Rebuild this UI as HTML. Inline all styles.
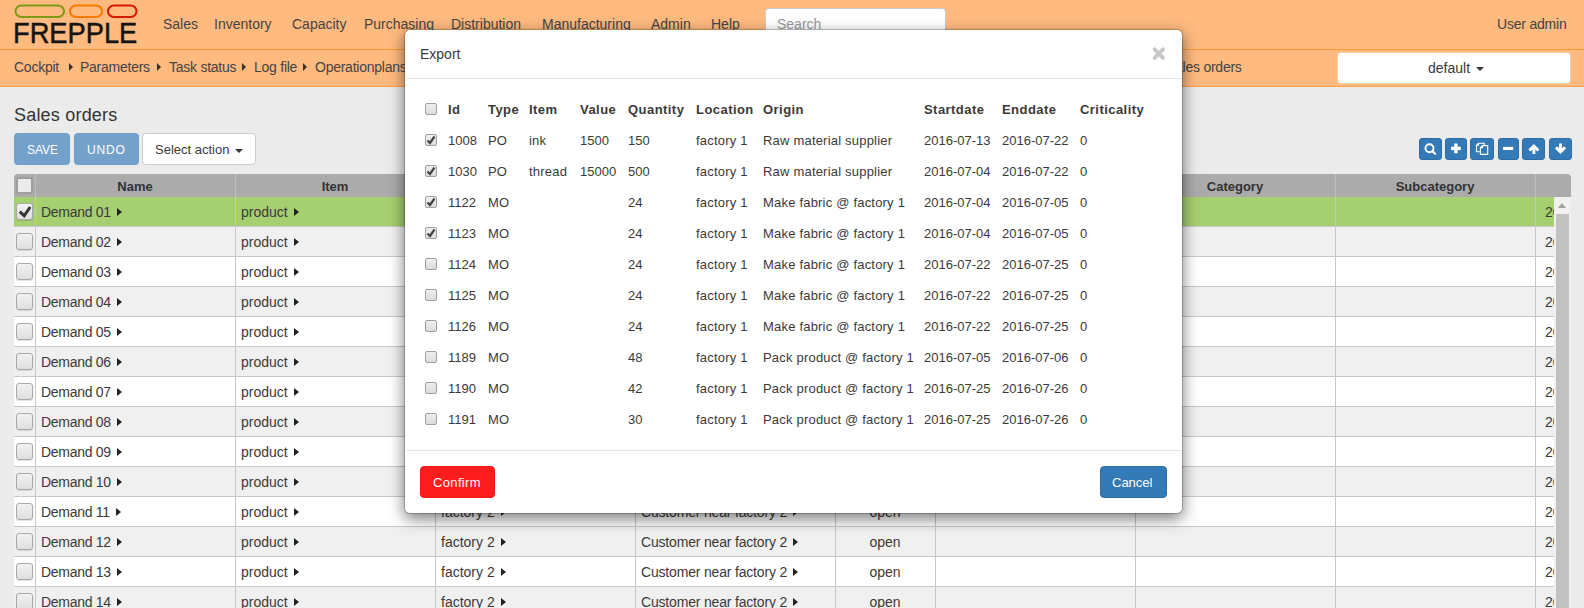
<!DOCTYPE html><html><head><meta charset="utf-8"><style>
*{box-sizing:border-box}
html,body{margin:0;padding:0;width:1584px;height:608px;overflow:hidden;background:#ebebeb;font-family:"Liberation Sans",sans-serif;color:#3a3a3a;position:relative}
.a{position:absolute;white-space:nowrap}
.t14{font-size:14px;line-height:16px}
.t13{font-size:13px;line-height:15px}
.nav{color:#444}
.caret{display:inline-block;width:0;height:0;border-top:4px solid #333;border-left:4px solid transparent;border-right:4px solid transparent;vertical-align:middle}
.rc{display:inline-block;width:0;height:0;border-left:5px solid #222;border-top:4px solid transparent;border-bottom:4px solid transparent;vertical-align:middle;margin-left:6px;position:relative;top:-1px}
</style></head><body><div class="a" style="left:0;top:0;width:1584px;height:49px;background:#ffba7f"></div>
<div class="a" style="left:0;top:49px;width:1584px;height:1px;background:#ff9833"></div>
<div class="a" style="left:0;top:50px;width:1584px;height:36px;background:#ffba7f"></div>
<div class="a" style="left:0;top:86px;width:1584px;height:1px;background:#ffa24f"></div>
<svg class="a" style="left:0;top:0" width="150" height="48" viewBox="0 0 150 48">
<rect x="15.5" y="5.5" width="48.5" height="11.5" rx="5.75" fill="none" stroke="#7f9a14" stroke-width="2"/>
<rect x="70" y="5.5" width="32" height="11.5" rx="5.75" fill="none" stroke="#f97a00" stroke-width="2"/>
<rect x="108" y="5.5" width="28.5" height="11.5" rx="5.75" fill="none" stroke="#d61a00" stroke-width="2"/>
<text x="13" y="42.8" font-family="Liberation Sans" font-size="30" textLength="124.3" lengthAdjust="spacingAndGlyphs" fill="#151515" stroke="#151515" stroke-width="0.5">FREPPLE</text>
</svg>
<div class="a t14 nav" style="left:163px;top:16px;">Sales</div>
<div class="a t14 nav" style="left:214px;top:16px;">Inventory</div>
<div class="a t14 nav" style="left:292px;top:16px;">Capacity</div>
<div class="a t14 nav" style="left:364px;top:16px;">Purchasing</div>
<div class="a t14 nav" style="left:451px;top:16px;">Distribution</div>
<div class="a t14 nav" style="left:542px;top:16px;">Manufacturing</div>
<div class="a t14 nav" style="left:651px;top:16px;">Admin</div>
<div class="a t14 nav" style="left:711px;top:16px;">Help</div>
<div class="a" style="left:765px;top:8px;width:181px;height:34px;background:#fff;border:1px solid #ccc;border-radius:4px"></div>
<div class="a t14" style="left:777px;top:16px;color:#999">Search</div>
<div class="a t14 nav" style="left:1497px;top:16px;letter-spacing:-0.2px">User admin</div>
<div class="a t14 nav" style="left:14px;top:59px;letter-spacing:-0.25px">Cockpit</div>
<div class="a t14 nav" style="left:80px;top:59px;letter-spacing:-0.25px">Parameters</div>
<div class="a t14 nav" style="left:169px;top:59px;letter-spacing:-0.25px">Task status</div>
<div class="a t14 nav" style="left:254px;top:59px;letter-spacing:-0.25px">Log file</div>
<div class="a t14 nav" style="left:315px;top:59px;letter-spacing:-0.25px">Operationplans</div>
<div class="a" style="left:69px;top:63px;width:0;height:0;border-left:4px solid #333;border-top:4px solid transparent;border-bottom:4px solid transparent"></div>
<div class="a" style="left:157px;top:63px;width:0;height:0;border-left:4px solid #333;border-top:4px solid transparent;border-bottom:4px solid transparent"></div>
<div class="a" style="left:242px;top:63px;width:0;height:0;border-left:4px solid #333;border-top:4px solid transparent;border-bottom:4px solid transparent"></div>
<div class="a" style="left:303px;top:63px;width:0;height:0;border-left:4px solid #333;border-top:4px solid transparent;border-bottom:4px solid transparent"></div>
<div class="a t14 nav" style="left:1166px;top:59px;letter-spacing:-0.25px">Sales orders</div>
<div class="a" style="left:1337px;top:52px;width:234px;height:32px;background:#fff;border:1px solid #f0d0b0;border-radius:4px"></div>
<div class="a t14" style="left:1428px;top:60px;">default <span class="caret" style="margin-left:2px"></span></div>
<div class="a " style="left:14px;top:105px;font-size:18px;line-height:20px;color:#333;letter-spacing:0.2px">Sales orders</div>
<div class="a" style="left:14px;top:133px;width:56px;height:32px;background:#73a1c9;border-radius:4px"></div>
<div class="a " style="left:27px;top:143px;font-size:12px;line-height:14px;color:#fff">SAVE</div>
<div class="a" style="left:74px;top:133px;width:65px;height:32px;background:#73a1c9;border-radius:4px"></div>
<div class="a " style="left:87px;top:143px;font-size:12px;line-height:14px;color:#fff;letter-spacing:0.8px">UNDO</div>
<div class="a" style="left:142px;top:133px;width:114px;height:32px;background:#fff;border:1px solid #ccc;border-radius:4px"></div>
<div class="a t13" style="left:155px;top:142px;">Select action <span class="caret" style="margin-left:2px"></span></div>
<div class="a" style="left:1419px;top:138px;width:23px;height:22px;background:#337ab7;border:1px solid #2e6da4;border-radius:3px"></div>
<div class="a" style="left:1445px;top:138px;width:22px;height:22px;background:#337ab7;border:1px solid #2e6da4;border-radius:3px"></div>
<div class="a" style="left:1470px;top:138px;width:24px;height:22px;background:#337ab7;border:1px solid #2e6da4;border-radius:3px"></div>
<div class="a" style="left:1498px;top:138px;width:21px;height:22px;background:#337ab7;border:1px solid #2e6da4;border-radius:3px"></div>
<div class="a" style="left:1522px;top:138px;width:23px;height:22px;background:#337ab7;border:1px solid #2e6da4;border-radius:3px"></div>
<div class="a" style="left:1549px;top:138px;width:23px;height:22px;background:#337ab7;border:1px solid #2e6da4;border-radius:3px"></div>
<svg class="a" style="left:1400px;top:130px" width="184" height="40" viewBox="1400 130 184 40">
<g fill="none" stroke="#fff">
<circle cx="1429.5" cy="148.2" r="4" stroke-width="1.9"/>
<line x1="1432.4" y1="151.1" x2="1435.1" y2="153.8" stroke-width="2.2" stroke-linecap="round"/>
<path d="M1478.5 143.3 h5.7 v8.4 h-7.7 v-6.4 z M1476.5 145.3 h2 v-2" stroke-width="1.1"/>
<path d="M1482.5 145.6 h5.2 v8.8 h-7.3 v-6.6 z M1480.4 147.8 h2.1 v-2.2" stroke-width="1.1" fill="#337ab7"/>
</g>
<g fill="#fff">
<rect x="1451" y="146.7" width="9.8" height="3.4"/>
<rect x="1454.2" y="143.5" width="3.4" height="9.8"/>
<rect x="1503" y="146.9" width="10.2" height="3.1"/>
</g>
<path d="M1529.4 150.5 L1533.9 146 L1538.4 150.5 M1533.9 146.5 V154" fill="none" stroke="#fff" stroke-width="2.9" stroke-linecap="butt" stroke-linejoin="miter"/>
<path d="M1556 147.4 L1560.5 151.9 L1565 147.4 M1560.5 143.6 V151.4" fill="none" stroke="#fff" stroke-width="2.9" stroke-linecap="butt" stroke-linejoin="miter"/>
</svg>
<div class="a" style="left:14px;top:174px;width:1557px;height:434px;background:#fff;border-radius:4px 4px 0 0;overflow:hidden">
<div class="a" style="left:0;top:0;width:1557px;height:23px;background:#ababab"></div>
<div class="a" style="left:0;top:23px;width:1557px;height:29px;background:#a6cf71"></div>
<div class="a" style="left:0;top:52px;width:1557px;height:1px;background:#c8c8c8"></div>
<div class="a" style="left:0;top:53px;width:1557px;height:29px;background:#f0f0f0"></div>
<div class="a" style="left:0;top:82px;width:1557px;height:1px;background:#c8c8c8"></div>
<div class="a" style="left:0;top:83px;width:1557px;height:29px;background:#ffffff"></div>
<div class="a" style="left:0;top:112px;width:1557px;height:1px;background:#c8c8c8"></div>
<div class="a" style="left:0;top:113px;width:1557px;height:29px;background:#f0f0f0"></div>
<div class="a" style="left:0;top:142px;width:1557px;height:1px;background:#c8c8c8"></div>
<div class="a" style="left:0;top:143px;width:1557px;height:29px;background:#ffffff"></div>
<div class="a" style="left:0;top:172px;width:1557px;height:1px;background:#c8c8c8"></div>
<div class="a" style="left:0;top:173px;width:1557px;height:29px;background:#f0f0f0"></div>
<div class="a" style="left:0;top:202px;width:1557px;height:1px;background:#c8c8c8"></div>
<div class="a" style="left:0;top:203px;width:1557px;height:29px;background:#ffffff"></div>
<div class="a" style="left:0;top:232px;width:1557px;height:1px;background:#c8c8c8"></div>
<div class="a" style="left:0;top:233px;width:1557px;height:29px;background:#f0f0f0"></div>
<div class="a" style="left:0;top:262px;width:1557px;height:1px;background:#c8c8c8"></div>
<div class="a" style="left:0;top:263px;width:1557px;height:29px;background:#ffffff"></div>
<div class="a" style="left:0;top:292px;width:1557px;height:1px;background:#c8c8c8"></div>
<div class="a" style="left:0;top:293px;width:1557px;height:29px;background:#f0f0f0"></div>
<div class="a" style="left:0;top:322px;width:1557px;height:1px;background:#c8c8c8"></div>
<div class="a" style="left:0;top:323px;width:1557px;height:29px;background:#ffffff"></div>
<div class="a" style="left:0;top:352px;width:1557px;height:1px;background:#c8c8c8"></div>
<div class="a" style="left:0;top:353px;width:1557px;height:29px;background:#f0f0f0"></div>
<div class="a" style="left:0;top:382px;width:1557px;height:1px;background:#c8c8c8"></div>
<div class="a" style="left:0;top:383px;width:1557px;height:29px;background:#ffffff"></div>
<div class="a" style="left:0;top:412px;width:1557px;height:1px;background:#c8c8c8"></div>
<div class="a" style="left:0;top:413px;width:1557px;height:29px;background:#f0f0f0"></div>
<div class="a" style="left:0;top:442px;width:1557px;height:1px;background:#c8c8c8"></div>
<div class="a" style="left:21px;top:0;width:1px;height:23px;background:#bdbdbd"></div>
<div class="a" style="left:21px;top:23px;width:1px;height:600px;background:#c8c8c8"></div>
<div class="a" style="left:221px;top:0;width:1px;height:23px;background:#bdbdbd"></div>
<div class="a" style="left:221px;top:23px;width:1px;height:600px;background:#c8c8c8"></div>
<div class="a" style="left:421px;top:0;width:1px;height:23px;background:#bdbdbd"></div>
<div class="a" style="left:421px;top:23px;width:1px;height:600px;background:#c8c8c8"></div>
<div class="a" style="left:621px;top:0;width:1px;height:23px;background:#bdbdbd"></div>
<div class="a" style="left:621px;top:23px;width:1px;height:600px;background:#c8c8c8"></div>
<div class="a" style="left:821px;top:0;width:1px;height:23px;background:#bdbdbd"></div>
<div class="a" style="left:821px;top:23px;width:1px;height:600px;background:#c8c8c8"></div>
<div class="a" style="left:921px;top:0;width:1px;height:23px;background:#bdbdbd"></div>
<div class="a" style="left:921px;top:23px;width:1px;height:600px;background:#c8c8c8"></div>
<div class="a" style="left:1121px;top:0;width:1px;height:23px;background:#bdbdbd"></div>
<div class="a" style="left:1121px;top:23px;width:1px;height:600px;background:#c8c8c8"></div>
<div class="a" style="left:1321px;top:0;width:1px;height:23px;background:#bdbdbd"></div>
<div class="a" style="left:1321px;top:23px;width:1px;height:600px;background:#c8c8c8"></div>
<div class="a" style="left:1521px;top:0;width:1px;height:23px;background:#bdbdbd"></div>
<div class="a" style="left:1521px;top:23px;width:1px;height:600px;background:#c8c8c8"></div>
</div>
<div class="a" style="left:35px;width:200px;text-align:center;top:179px;font-size:13px;line-height:15px;font-weight:bold;color:#333">Name</div>
<div class="a" style="left:235px;width:200px;text-align:center;top:179px;font-size:13px;line-height:15px;font-weight:bold;color:#333">Item</div>
<div class="a" style="left:1135px;width:200px;text-align:center;top:179px;font-size:13px;line-height:15px;font-weight:bold;color:#333">Category</div>
<div class="a" style="left:1335px;width:200px;text-align:center;top:179px;font-size:13px;line-height:15px;font-weight:bold;color:#333">Subcategory</div>
<div class="a t14" style="left:41px;top:204px;"><span style="letter-spacing:-0.3px">Demand 01</span><span class="rc"></span></div>
<div class="a t14" style="left:241px;top:204px;">product<span class="rc"></span></div>
<div class="a t14" style="left:441px;top:204px;">factory 2<span class="rc"></span></div>
<div class="a t14" style="left:641px;top:204px;"><span style="letter-spacing:-0.18px">Customer near factory 2</span><span class="rc"></span></div>
<div class="a t14" style="left:835px;width:100px;text-align:center;top:204px">open</div>
<div class="a t14" style="left:1545px;top:204px;">20</div>
<div class="a" style="left:16px;top:203px;width:17px;height:17px;border:1px solid #a8a8a8;border-radius:3px;background:linear-gradient(#f2f2f2,#dedede);box-shadow:0 1px 1px rgba(0,0,0,.12)"><svg width="17" height="17" style="position:absolute;left:0;top:0"><path d="M2.8 7.6 L7.2 11.8 L13.2 3" stroke="#333" stroke-width="3" fill="none"/></svg></div>
<div class="a t14" style="left:41px;top:234px;"><span style="letter-spacing:-0.3px">Demand 02</span><span class="rc"></span></div>
<div class="a t14" style="left:241px;top:234px;">product<span class="rc"></span></div>
<div class="a t14" style="left:441px;top:234px;">factory 2<span class="rc"></span></div>
<div class="a t14" style="left:641px;top:234px;"><span style="letter-spacing:-0.18px">Customer near factory 2</span><span class="rc"></span></div>
<div class="a t14" style="left:835px;width:100px;text-align:center;top:234px">open</div>
<div class="a t14" style="left:1545px;top:234px;">20</div>
<div class="a" style="left:16px;top:233px;width:17px;height:17px;border:1px solid #a8a8a8;border-radius:3px;background:linear-gradient(#f2f2f2,#dedede);box-shadow:0 1px 1px rgba(0,0,0,.12)"></div>
<div class="a t14" style="left:41px;top:264px;"><span style="letter-spacing:-0.3px">Demand 03</span><span class="rc"></span></div>
<div class="a t14" style="left:241px;top:264px;">product<span class="rc"></span></div>
<div class="a t14" style="left:441px;top:264px;">factory 2<span class="rc"></span></div>
<div class="a t14" style="left:641px;top:264px;"><span style="letter-spacing:-0.18px">Customer near factory 2</span><span class="rc"></span></div>
<div class="a t14" style="left:835px;width:100px;text-align:center;top:264px">open</div>
<div class="a t14" style="left:1545px;top:264px;">20</div>
<div class="a" style="left:16px;top:263px;width:17px;height:17px;border:1px solid #a8a8a8;border-radius:3px;background:linear-gradient(#f2f2f2,#dedede);box-shadow:0 1px 1px rgba(0,0,0,.12)"></div>
<div class="a t14" style="left:41px;top:294px;"><span style="letter-spacing:-0.3px">Demand 04</span><span class="rc"></span></div>
<div class="a t14" style="left:241px;top:294px;">product<span class="rc"></span></div>
<div class="a t14" style="left:441px;top:294px;">factory 2<span class="rc"></span></div>
<div class="a t14" style="left:641px;top:294px;"><span style="letter-spacing:-0.18px">Customer near factory 2</span><span class="rc"></span></div>
<div class="a t14" style="left:835px;width:100px;text-align:center;top:294px">open</div>
<div class="a t14" style="left:1545px;top:294px;">20</div>
<div class="a" style="left:16px;top:293px;width:17px;height:17px;border:1px solid #a8a8a8;border-radius:3px;background:linear-gradient(#f2f2f2,#dedede);box-shadow:0 1px 1px rgba(0,0,0,.12)"></div>
<div class="a t14" style="left:41px;top:324px;"><span style="letter-spacing:-0.3px">Demand 05</span><span class="rc"></span></div>
<div class="a t14" style="left:241px;top:324px;">product<span class="rc"></span></div>
<div class="a t14" style="left:441px;top:324px;">factory 2<span class="rc"></span></div>
<div class="a t14" style="left:641px;top:324px;"><span style="letter-spacing:-0.18px">Customer near factory 2</span><span class="rc"></span></div>
<div class="a t14" style="left:835px;width:100px;text-align:center;top:324px">open</div>
<div class="a t14" style="left:1545px;top:324px;">20</div>
<div class="a" style="left:16px;top:323px;width:17px;height:17px;border:1px solid #a8a8a8;border-radius:3px;background:linear-gradient(#f2f2f2,#dedede);box-shadow:0 1px 1px rgba(0,0,0,.12)"></div>
<div class="a t14" style="left:41px;top:354px;"><span style="letter-spacing:-0.3px">Demand 06</span><span class="rc"></span></div>
<div class="a t14" style="left:241px;top:354px;">product<span class="rc"></span></div>
<div class="a t14" style="left:441px;top:354px;">factory 2<span class="rc"></span></div>
<div class="a t14" style="left:641px;top:354px;"><span style="letter-spacing:-0.18px">Customer near factory 2</span><span class="rc"></span></div>
<div class="a t14" style="left:835px;width:100px;text-align:center;top:354px">open</div>
<div class="a t14" style="left:1545px;top:354px;">20</div>
<div class="a" style="left:16px;top:353px;width:17px;height:17px;border:1px solid #a8a8a8;border-radius:3px;background:linear-gradient(#f2f2f2,#dedede);box-shadow:0 1px 1px rgba(0,0,0,.12)"></div>
<div class="a t14" style="left:41px;top:384px;"><span style="letter-spacing:-0.3px">Demand 07</span><span class="rc"></span></div>
<div class="a t14" style="left:241px;top:384px;">product<span class="rc"></span></div>
<div class="a t14" style="left:441px;top:384px;">factory 2<span class="rc"></span></div>
<div class="a t14" style="left:641px;top:384px;"><span style="letter-spacing:-0.18px">Customer near factory 2</span><span class="rc"></span></div>
<div class="a t14" style="left:835px;width:100px;text-align:center;top:384px">open</div>
<div class="a t14" style="left:1545px;top:384px;">20</div>
<div class="a" style="left:16px;top:383px;width:17px;height:17px;border:1px solid #a8a8a8;border-radius:3px;background:linear-gradient(#f2f2f2,#dedede);box-shadow:0 1px 1px rgba(0,0,0,.12)"></div>
<div class="a t14" style="left:41px;top:414px;"><span style="letter-spacing:-0.3px">Demand 08</span><span class="rc"></span></div>
<div class="a t14" style="left:241px;top:414px;">product<span class="rc"></span></div>
<div class="a t14" style="left:441px;top:414px;">factory 2<span class="rc"></span></div>
<div class="a t14" style="left:641px;top:414px;"><span style="letter-spacing:-0.18px">Customer near factory 2</span><span class="rc"></span></div>
<div class="a t14" style="left:835px;width:100px;text-align:center;top:414px">open</div>
<div class="a t14" style="left:1545px;top:414px;">20</div>
<div class="a" style="left:16px;top:413px;width:17px;height:17px;border:1px solid #a8a8a8;border-radius:3px;background:linear-gradient(#f2f2f2,#dedede);box-shadow:0 1px 1px rgba(0,0,0,.12)"></div>
<div class="a t14" style="left:41px;top:444px;"><span style="letter-spacing:-0.3px">Demand 09</span><span class="rc"></span></div>
<div class="a t14" style="left:241px;top:444px;">product<span class="rc"></span></div>
<div class="a t14" style="left:441px;top:444px;">factory 2<span class="rc"></span></div>
<div class="a t14" style="left:641px;top:444px;"><span style="letter-spacing:-0.18px">Customer near factory 2</span><span class="rc"></span></div>
<div class="a t14" style="left:835px;width:100px;text-align:center;top:444px">open</div>
<div class="a t14" style="left:1545px;top:444px;">20</div>
<div class="a" style="left:16px;top:443px;width:17px;height:17px;border:1px solid #a8a8a8;border-radius:3px;background:linear-gradient(#f2f2f2,#dedede);box-shadow:0 1px 1px rgba(0,0,0,.12)"></div>
<div class="a t14" style="left:41px;top:474px;"><span style="letter-spacing:-0.3px">Demand 10</span><span class="rc"></span></div>
<div class="a t14" style="left:241px;top:474px;">product<span class="rc"></span></div>
<div class="a t14" style="left:441px;top:474px;">factory 2<span class="rc"></span></div>
<div class="a t14" style="left:641px;top:474px;"><span style="letter-spacing:-0.18px">Customer near factory 2</span><span class="rc"></span></div>
<div class="a t14" style="left:835px;width:100px;text-align:center;top:474px">open</div>
<div class="a t14" style="left:1545px;top:474px;">20</div>
<div class="a" style="left:16px;top:473px;width:17px;height:17px;border:1px solid #a8a8a8;border-radius:3px;background:linear-gradient(#f2f2f2,#dedede);box-shadow:0 1px 1px rgba(0,0,0,.12)"></div>
<div class="a t14" style="left:41px;top:504px;"><span style="letter-spacing:-0.3px">Demand 11</span><span class="rc"></span></div>
<div class="a t14" style="left:241px;top:504px;">product<span class="rc"></span></div>
<div class="a t14" style="left:441px;top:504px;">factory 2<span class="rc"></span></div>
<div class="a t14" style="left:641px;top:504px;"><span style="letter-spacing:-0.18px">Customer near factory 2</span><span class="rc"></span></div>
<div class="a t14" style="left:835px;width:100px;text-align:center;top:504px">open</div>
<div class="a t14" style="left:1545px;top:504px;">20</div>
<div class="a" style="left:16px;top:503px;width:17px;height:17px;border:1px solid #a8a8a8;border-radius:3px;background:linear-gradient(#f2f2f2,#dedede);box-shadow:0 1px 1px rgba(0,0,0,.12)"></div>
<div class="a t14" style="left:41px;top:534px;"><span style="letter-spacing:-0.3px">Demand 12</span><span class="rc"></span></div>
<div class="a t14" style="left:241px;top:534px;">product<span class="rc"></span></div>
<div class="a t14" style="left:441px;top:534px;">factory 2<span class="rc"></span></div>
<div class="a t14" style="left:641px;top:534px;"><span style="letter-spacing:-0.18px">Customer near factory 2</span><span class="rc"></span></div>
<div class="a t14" style="left:835px;width:100px;text-align:center;top:534px">open</div>
<div class="a t14" style="left:1545px;top:534px;">20</div>
<div class="a" style="left:16px;top:533px;width:17px;height:17px;border:1px solid #a8a8a8;border-radius:3px;background:linear-gradient(#f2f2f2,#dedede);box-shadow:0 1px 1px rgba(0,0,0,.12)"></div>
<div class="a t14" style="left:41px;top:564px;"><span style="letter-spacing:-0.3px">Demand 13</span><span class="rc"></span></div>
<div class="a t14" style="left:241px;top:564px;">product<span class="rc"></span></div>
<div class="a t14" style="left:441px;top:564px;">factory 2<span class="rc"></span></div>
<div class="a t14" style="left:641px;top:564px;"><span style="letter-spacing:-0.18px">Customer near factory 2</span><span class="rc"></span></div>
<div class="a t14" style="left:835px;width:100px;text-align:center;top:564px">open</div>
<div class="a t14" style="left:1545px;top:564px;">20</div>
<div class="a" style="left:16px;top:563px;width:17px;height:17px;border:1px solid #a8a8a8;border-radius:3px;background:linear-gradient(#f2f2f2,#dedede);box-shadow:0 1px 1px rgba(0,0,0,.12)"></div>
<div class="a t14" style="left:41px;top:594px;"><span style="letter-spacing:-0.3px">Demand 14</span><span class="rc"></span></div>
<div class="a t14" style="left:241px;top:594px;">product<span class="rc"></span></div>
<div class="a t14" style="left:441px;top:594px;">factory 2<span class="rc"></span></div>
<div class="a t14" style="left:641px;top:594px;"><span style="letter-spacing:-0.18px">Customer near factory 2</span><span class="rc"></span></div>
<div class="a t14" style="left:835px;width:100px;text-align:center;top:594px">open</div>
<div class="a t14" style="left:1545px;top:594px;">20</div>
<div class="a" style="left:16px;top:593px;width:17px;height:17px;border:1px solid #a8a8a8;border-radius:3px;background:linear-gradient(#f2f2f2,#dedede);box-shadow:0 1px 1px rgba(0,0,0,.12)"></div>
<div class="a" style="left:16px;top:177px;width:17px;height:17px;border:2px solid #9e9e9e;border-radius:3px;background:#ebebeb"></div>
<div class="a" style="left:1554px;top:197px;width:17px;height:411px;background:#f1f1f1"></div>
<div class="a" style="left:1556px;top:214px;width:13px;height:394px;background:#c1c1c1"></div>
<div class="a" style="left:1558px;top:203px;width:0;height:0;border-bottom:5px solid #a3a3a3;border-left:4.5px solid transparent;border-right:4.5px solid transparent"></div>
<div class="a" style="left:404px;top:29px;width:779px;height:485px;background:#fff;border:1px solid rgba(0,0,0,.2);background-clip:padding-box;border-radius:6px;box-shadow:0 5px 15px rgba(0,0,0,.5)"></div>
<div class="a t14" style="left:420px;top:46px;">Export</div>
<svg class="a" style="left:1148px;top:43px" width="22" height="22" viewBox="1148 43 22 22"><path d="M1154.6 49.4 L1163.0 57.800000000000004 M1163.0 49.4 L1154.6 57.800000000000004" stroke="#c8c8c8" stroke-width="4" stroke-linecap="round"/></svg>
<div class="a" style="left:406px;top:78px;width:776px;height:1px;background:#e5e5e5"></div>
<div class="a" style="left:406px;top:450px;width:776px;height:1px;background:#e5e5e5"></div>
<div class="a t13" style="left:448px;top:102px;font-weight:bold;letter-spacing:0.45px">Id</div>
<div class="a t13" style="left:488px;top:102px;font-weight:bold;letter-spacing:0.45px">Type</div>
<div class="a t13" style="left:529px;top:102px;font-weight:bold;letter-spacing:0.45px">Item</div>
<div class="a t13" style="left:580px;top:102px;font-weight:bold;letter-spacing:0.45px">Value</div>
<div class="a t13" style="left:628px;top:102px;font-weight:bold;letter-spacing:0.45px">Quantity</div>
<div class="a t13" style="left:696px;top:102px;font-weight:bold;letter-spacing:0.45px">Location</div>
<div class="a t13" style="left:763px;top:102px;font-weight:bold;letter-spacing:0.45px">Origin</div>
<div class="a t13" style="left:924px;top:102px;font-weight:bold;letter-spacing:0.45px">Startdate</div>
<div class="a t13" style="left:1002px;top:102px;font-weight:bold;letter-spacing:0.45px">Enddate</div>
<div class="a t13" style="left:1080px;top:102px;font-weight:bold;letter-spacing:0.45px">Criticality</div>
<div class="a" style="left:425px;top:103px;width:12px;height:12px;border:1px solid #a0a0a0;border-radius:2px;background:linear-gradient(#eeeeee,#dcdcdc)"></div>
<div class="a t13" style="left:448px;top:133px;">1008</div>
<div class="a t13" style="left:488px;top:133px;letter-spacing:0.2px">PO</div>
<div class="a t13" style="left:529px;top:133px;letter-spacing:0.2px">ink</div>
<div class="a t13" style="left:580px;top:133px;">1500</div>
<div class="a t13" style="left:628px;top:133px;">150</div>
<div class="a t13" style="left:696px;top:133px;letter-spacing:0.2px">factory 1</div>
<div class="a t13" style="left:763px;top:133px;letter-spacing:0.2px">Raw material supplier</div>
<div class="a t13" style="left:924px;top:133px;">2016-07-13</div>
<div class="a t13" style="left:1002px;top:133px;">2016-07-22</div>
<div class="a t13" style="left:1080px;top:133px;">0</div>
<div class="a" style="left:425px;top:134px;width:12px;height:12px;border:1px solid #a0a0a0;border-radius:2px;background:linear-gradient(#eeeeee,#dcdcdc)"><svg width="12" height="12" style="position:absolute;left:-1px;top:-1px"><path d="M2.5 6.5 L5 9 L9.5 2.5" stroke="#444" stroke-width="2.2" fill="none"/></svg></div>
<div class="a t13" style="left:448px;top:164px;">1030</div>
<div class="a t13" style="left:488px;top:164px;letter-spacing:0.2px">PO</div>
<div class="a t13" style="left:529px;top:164px;letter-spacing:0.2px">thread</div>
<div class="a t13" style="left:580px;top:164px;">15000</div>
<div class="a t13" style="left:628px;top:164px;">500</div>
<div class="a t13" style="left:696px;top:164px;letter-spacing:0.2px">factory 1</div>
<div class="a t13" style="left:763px;top:164px;letter-spacing:0.2px">Raw material supplier</div>
<div class="a t13" style="left:924px;top:164px;">2016-07-04</div>
<div class="a t13" style="left:1002px;top:164px;">2016-07-22</div>
<div class="a t13" style="left:1080px;top:164px;">0</div>
<div class="a" style="left:425px;top:165px;width:12px;height:12px;border:1px solid #a0a0a0;border-radius:2px;background:linear-gradient(#eeeeee,#dcdcdc)"><svg width="12" height="12" style="position:absolute;left:-1px;top:-1px"><path d="M2.5 6.5 L5 9 L9.5 2.5" stroke="#444" stroke-width="2.2" fill="none"/></svg></div>
<div class="a t13" style="left:448px;top:195px;">1122</div>
<div class="a t13" style="left:488px;top:195px;letter-spacing:0.2px">MO</div>
<div class="a t13" style="left:628px;top:195px;">24</div>
<div class="a t13" style="left:696px;top:195px;letter-spacing:0.2px">factory 1</div>
<div class="a t13" style="left:763px;top:195px;letter-spacing:0.2px">Make fabric @ factory 1</div>
<div class="a t13" style="left:924px;top:195px;">2016-07-04</div>
<div class="a t13" style="left:1002px;top:195px;">2016-07-05</div>
<div class="a t13" style="left:1080px;top:195px;">0</div>
<div class="a" style="left:425px;top:196px;width:12px;height:12px;border:1px solid #a0a0a0;border-radius:2px;background:linear-gradient(#eeeeee,#dcdcdc)"><svg width="12" height="12" style="position:absolute;left:-1px;top:-1px"><path d="M2.5 6.5 L5 9 L9.5 2.5" stroke="#444" stroke-width="2.2" fill="none"/></svg></div>
<div class="a t13" style="left:448px;top:226px;">1123</div>
<div class="a t13" style="left:488px;top:226px;letter-spacing:0.2px">MO</div>
<div class="a t13" style="left:628px;top:226px;">24</div>
<div class="a t13" style="left:696px;top:226px;letter-spacing:0.2px">factory 1</div>
<div class="a t13" style="left:763px;top:226px;letter-spacing:0.2px">Make fabric @ factory 1</div>
<div class="a t13" style="left:924px;top:226px;">2016-07-04</div>
<div class="a t13" style="left:1002px;top:226px;">2016-07-05</div>
<div class="a t13" style="left:1080px;top:226px;">0</div>
<div class="a" style="left:425px;top:227px;width:12px;height:12px;border:1px solid #a0a0a0;border-radius:2px;background:linear-gradient(#eeeeee,#dcdcdc)"><svg width="12" height="12" style="position:absolute;left:-1px;top:-1px"><path d="M2.5 6.5 L5 9 L9.5 2.5" stroke="#444" stroke-width="2.2" fill="none"/></svg></div>
<div class="a t13" style="left:448px;top:257px;">1124</div>
<div class="a t13" style="left:488px;top:257px;letter-spacing:0.2px">MO</div>
<div class="a t13" style="left:628px;top:257px;">24</div>
<div class="a t13" style="left:696px;top:257px;letter-spacing:0.2px">factory 1</div>
<div class="a t13" style="left:763px;top:257px;letter-spacing:0.2px">Make fabric @ factory 1</div>
<div class="a t13" style="left:924px;top:257px;">2016-07-22</div>
<div class="a t13" style="left:1002px;top:257px;">2016-07-25</div>
<div class="a t13" style="left:1080px;top:257px;">0</div>
<div class="a" style="left:425px;top:258px;width:12px;height:12px;border:1px solid #a0a0a0;border-radius:2px;background:linear-gradient(#eeeeee,#dcdcdc)"></div>
<div class="a t13" style="left:448px;top:288px;">1125</div>
<div class="a t13" style="left:488px;top:288px;letter-spacing:0.2px">MO</div>
<div class="a t13" style="left:628px;top:288px;">24</div>
<div class="a t13" style="left:696px;top:288px;letter-spacing:0.2px">factory 1</div>
<div class="a t13" style="left:763px;top:288px;letter-spacing:0.2px">Make fabric @ factory 1</div>
<div class="a t13" style="left:924px;top:288px;">2016-07-22</div>
<div class="a t13" style="left:1002px;top:288px;">2016-07-25</div>
<div class="a t13" style="left:1080px;top:288px;">0</div>
<div class="a" style="left:425px;top:289px;width:12px;height:12px;border:1px solid #a0a0a0;border-radius:2px;background:linear-gradient(#eeeeee,#dcdcdc)"></div>
<div class="a t13" style="left:448px;top:319px;">1126</div>
<div class="a t13" style="left:488px;top:319px;letter-spacing:0.2px">MO</div>
<div class="a t13" style="left:628px;top:319px;">24</div>
<div class="a t13" style="left:696px;top:319px;letter-spacing:0.2px">factory 1</div>
<div class="a t13" style="left:763px;top:319px;letter-spacing:0.2px">Make fabric @ factory 1</div>
<div class="a t13" style="left:924px;top:319px;">2016-07-22</div>
<div class="a t13" style="left:1002px;top:319px;">2016-07-25</div>
<div class="a t13" style="left:1080px;top:319px;">0</div>
<div class="a" style="left:425px;top:320px;width:12px;height:12px;border:1px solid #a0a0a0;border-radius:2px;background:linear-gradient(#eeeeee,#dcdcdc)"></div>
<div class="a t13" style="left:448px;top:350px;">1189</div>
<div class="a t13" style="left:488px;top:350px;letter-spacing:0.2px">MO</div>
<div class="a t13" style="left:628px;top:350px;">48</div>
<div class="a t13" style="left:696px;top:350px;letter-spacing:0.2px">factory 1</div>
<div class="a t13" style="left:763px;top:350px;letter-spacing:0.2px">Pack product @ factory 1</div>
<div class="a t13" style="left:924px;top:350px;">2016-07-05</div>
<div class="a t13" style="left:1002px;top:350px;">2016-07-06</div>
<div class="a t13" style="left:1080px;top:350px;">0</div>
<div class="a" style="left:425px;top:351px;width:12px;height:12px;border:1px solid #a0a0a0;border-radius:2px;background:linear-gradient(#eeeeee,#dcdcdc)"></div>
<div class="a t13" style="left:448px;top:381px;">1190</div>
<div class="a t13" style="left:488px;top:381px;letter-spacing:0.2px">MO</div>
<div class="a t13" style="left:628px;top:381px;">42</div>
<div class="a t13" style="left:696px;top:381px;letter-spacing:0.2px">factory 1</div>
<div class="a t13" style="left:763px;top:381px;letter-spacing:0.2px">Pack product @ factory 1</div>
<div class="a t13" style="left:924px;top:381px;">2016-07-25</div>
<div class="a t13" style="left:1002px;top:381px;">2016-07-26</div>
<div class="a t13" style="left:1080px;top:381px;">0</div>
<div class="a" style="left:425px;top:382px;width:12px;height:12px;border:1px solid #a0a0a0;border-radius:2px;background:linear-gradient(#eeeeee,#dcdcdc)"></div>
<div class="a t13" style="left:448px;top:412px;">1191</div>
<div class="a t13" style="left:488px;top:412px;letter-spacing:0.2px">MO</div>
<div class="a t13" style="left:628px;top:412px;">30</div>
<div class="a t13" style="left:696px;top:412px;letter-spacing:0.2px">factory 1</div>
<div class="a t13" style="left:763px;top:412px;letter-spacing:0.2px">Pack product @ factory 1</div>
<div class="a t13" style="left:924px;top:412px;">2016-07-25</div>
<div class="a t13" style="left:1002px;top:412px;">2016-07-26</div>
<div class="a t13" style="left:1080px;top:412px;">0</div>
<div class="a" style="left:425px;top:413px;width:12px;height:12px;border:1px solid #a0a0a0;border-radius:2px;background:linear-gradient(#eeeeee,#dcdcdc)"></div>
<div class="a" style="left:420px;top:466px;width:75px;height:32px;background:#ff1c1c;border-radius:4px;border:1px solid #e81a1a"></div>
<div class="a t13" style="left:433px;top:475px;color:#fff;letter-spacing:0.35px">Confirm</div>
<div class="a" style="left:1100px;top:466px;width:67px;height:32px;background:#337ab7;border-radius:4px;border:1px solid #2e6da4"></div>
<div class="a t13" style="left:1112px;top:475px;color:#fff">Cancel</div></body></html>
